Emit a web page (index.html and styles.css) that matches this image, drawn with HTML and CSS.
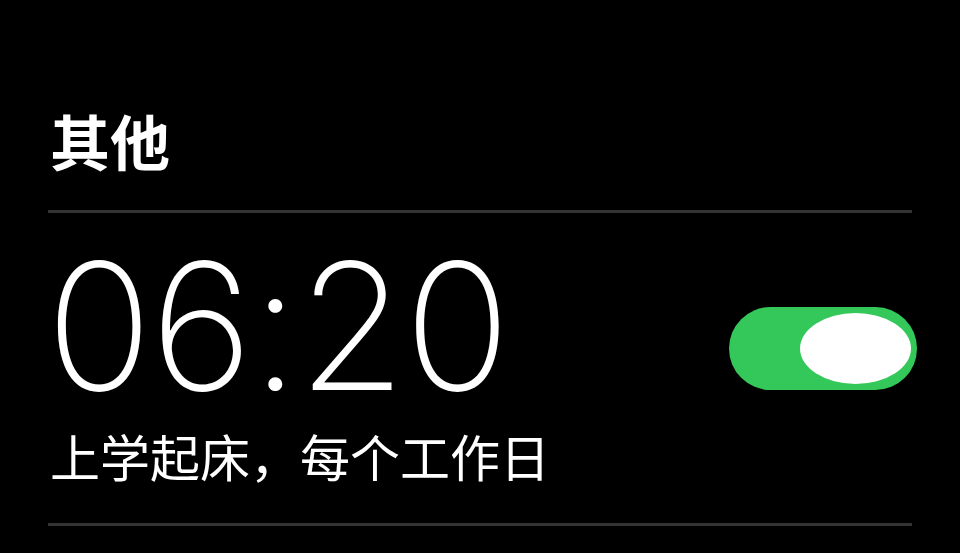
FILE: index.html
```html
<!DOCTYPE html>
<html lang="zh-CN">
<head>
  <meta charset="UTF-8" />
  <meta name="viewport" content="width=device-width, initial-scale=1.0"/>
  <title>闹钟</title>
  <link rel="stylesheet" href="styles.css">
</head>
<body>
  <div class="container">
    <h2 class="section-title">其他</h2>

    <div class="alarm">
      <div class="alarm-info">
        <div class="alarm-time">06:20</div>
        <div class="alarm-label">上学起床，每个工作日</div>
      </div>
      <label class="switch">
        <input type="checkbox" checked />
        <span class="switch-track"><span class="switch-knob"></span></span>
      </label>
    </div>
  </div>
</body>
</html>
```

FILE: styles.css
```css
body {
  margin: 0;
  background-color: #000;
  color: #fff;
  font-family: Inter, "Noto Sans CJK SC", sans-serif;
  overflow: hidden;
}

.container {
  padding: 0 48px;
}

.section-title {
  margin: 0;
  padding: 108px 0 30px 2px;
  font-size: 60px;
  line-height: 72px;
  font-weight: 700;
  border-bottom: 3px solid #333;
}

.alarm {
  display: flex;
  align-items: center;
  justify-content: space-between;
  border-bottom: 3px solid #333;
  padding: 20px 0 34px 0;
}

.alarm-time {
  font-size: 176px;
  font-weight: 200;
  line-height: 186px;
  letter-spacing: -2px;
  margin-left: -2px;
}

.alarm-label {
  font-size: 50px;
  line-height: 60px;
  margin-top: 10px;
  padding-left: 2px;
}

.switch {
  margin-right: -5px;
  margin-bottom: 26px;
}

.switch input {
  display: none;
}

.switch-track {
  display: flex;
  justify-content: flex-end;
  align-items: center;
  width: 188px;
  height: 83px;
  padding: 0 6px;
  box-sizing: border-box;
  border-radius: 42px;
  background-color: #34c759;
}

.switch-knob {
  width: 111px;
  height: 71px;
  border-radius: 50%;
  background-color: #fff;
}
```
